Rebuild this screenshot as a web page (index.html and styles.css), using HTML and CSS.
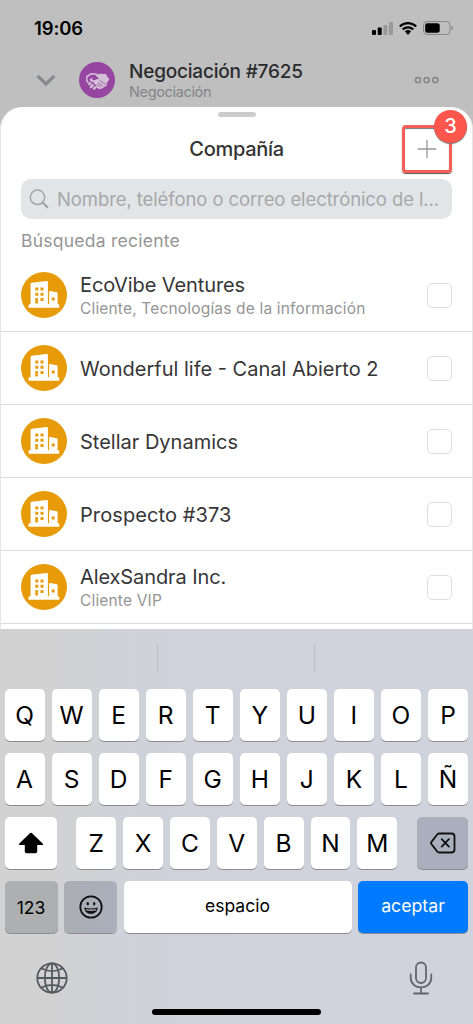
FILE: index.html
```html
<!DOCTYPE html>
<html lang="es">
<head>
<meta charset="utf-8">
<title>Compañía</title>
<link rel="stylesheet" href="styles.css">
</head>
<body>
<svg class="defs" width="0" height="0" aria-hidden="true">
  <symbol id="company" viewBox="0 0 46 46">
    <circle cx="23" cy="23" r="23" fill="#e89b08"/>
    <path fill="#fff" fill-rule="evenodd" d="M7.500 35.700v-2.500c0-.6.4-.9 1-.9h1.100V12.200c0-.8.4-1.200 1.100-1.400L25.300 9.100c.9-.1 1.600.3 1.600 1.200v22h1.200V19.800c0-.8.4-1 1.100-.9l6.500 1.300c.6.1.9.5.9 1.100v11h.8c.6 0 .9.3.9.9v2.500zM14.300 15.400v3h3v-3zM19.500 15.400v3h3v-3zM14.300 20.700v3h3v-3zM19.500 20.700v3h3v-3zM14.300 26v5.500h2.600V26zM19.500 26v3h3V26zM30.700 25.500v3h3v-3z"/>
  </symbol>
</svg>

<header class="top">
  <div class="status">
    <span class="clock">19:06</span>
    <span class="indicators">
      <svg width="21" height="13" viewBox="0 0 21 13"><rect y="8" width="4" height="5" rx="1"/><rect x="5.700" y="5.500" width="4" height="7.500" rx="1"/><g fill="#999"><rect x="11.400" y="3" width="4" height="10" rx="1"/><rect x="17" width="4" height="13" rx="1"/></g></svg>
      <svg width="18" height="13" viewBox="0 0 18 13"><g fill="none" stroke="#000" stroke-width="2.200"><path d="M.8 4.500C5.500.1 12.500.1 17.200 4.500"/><path d="M3.700 7.500C6.700 4.700 11.300 4.700 14.300 7.500"/></g><path d="M5.900 9.200c1.800-1.600 4.400-1.600 6.200 0L9 13z"/></svg>
      <svg width="31" height="14" viewBox="0 0 31 14"><rect x=".5" y=".5" width="26.500" height="13" rx="3.600" fill="none" stroke="#858585"/><rect x="2.200" y="2.200" width="14.500" height="9.600" rx="2"/><path d="M28.500 4.700c2 .9 2 3.700 0 4.600z" fill="#858585"/></svg>
    </span>
  </div>
  <div class="deal">
    <svg class="chevron" width="20" height="13" viewBox="0 0 20 13"><path d="M1.600 1.800 10 10l8.400-8.200" fill="none" stroke="#868a90" stroke-width="3.200"/></svg>
    <svg class="shake" width="36" height="36" viewBox="0 0 36 36"><circle cx="18" cy="18" r="18" fill="#9645a0"/><path fill="#d3bfd6" d="M16.500 13.600 20 11.800l6.800.3 3.500 5.300-2.700 3.800.6 1.600q-.5 1.500-2 1.200-.3 1.600-2 1.400-.5 1.500-2 1.100-1.200 1.300-2.800.3L17 25.200q1.200-2.200-1.400-3l-1-1.900-2.600-.6-1.300-2.300 3-2.500-.8 2.200q1.300 2 4.600.2l2.600-.8z"/><path d="M18.500 12.600 12.500 11.700 8 14.500 7.600 18.500 9.500 21" fill="none" stroke="#d3bfd6" stroke-width="1.500" stroke-linejoin="round"/><path d="m10.300 22.200.9-.9m.8 3.700 1.600-1.900m1.500 3.500.9-1.200" fill="none" stroke="#d3bfd6" stroke-width="2.500" stroke-linecap="round"/><path d="m20.800 18.400 6 4.200m-7.600-2 4.700 3.600m-5.900-2 3.500 2.800" fill="none" stroke="#9645a0" stroke-width=".8"/></svg>
    <div class="deal-text"><div class="deal-name">Negociación #7625</div><div class="deal-kind">Negociación</div></div>
    <svg class="more" width="26" height="8" viewBox="0 0 26 8"><g fill="none" stroke="#858585" stroke-width="1.500"><circle cx="4" cy="4" r="2.600"/><circle cx="12.600" cy="4" r="2.600"/><circle cx="21.300" cy="4" r="2.600"/></g></svg>
  </div>
</header>

<main class="sheet">
  <div class="handle"></div>
  <div class="sheet-head">
    <h1>Compañía</h1>
    <div class="add">
      <svg width="20" height="20" viewBox="0 0 20 20"><path d="M10 .8v18.400M.8 10h18.400" stroke="#999" stroke-width="1.300"/></svg>
      <span class="badge">3</span>
    </div>
  </div>
  <div class="search">
    <svg width="20" height="20" viewBox="0 0 20 20"><circle cx="8.500" cy="8.300" r="7.200" fill="none" stroke="#a3a5a7" stroke-width="1.500"/><path d="m13.800 13.700 4.500 4.400" stroke="#a3a5a7" stroke-width="2.200" stroke-linecap="round"/></svg>
    <span>Nombre, teléfono o correo electrónico de l...</span>
  </div>
  <h2>Búsqueda reciente</h2>
  <ul class="list">
    <li><svg class="avatar"><use href="#company"/></svg><div class="info"><div class="name tight">EcoVibe Ventures</div><div class="sub">Cliente, Tecnologías de la información</div></div><span class="check"></span></li>
    <li><svg class="avatar"><use href="#company"/></svg><div class="info"><div class="name">Wonderful life - Canal Abierto 2</div></div><span class="check"></span></li>
    <li><svg class="avatar"><use href="#company"/></svg><div class="info"><div class="name">Stellar Dynamics</div></div><span class="check"></span></li>
    <li><svg class="avatar"><use href="#company"/></svg><div class="info"><div class="name loose">Prospecto #373</div></div><span class="check"></span></li>
    <li><svg class="avatar"><use href="#company"/></svg><div class="info"><div class="name tight">AlexSandra Inc.</div><div class="sub">Cliente VIP</div></div><span class="check"></span></li>
  </ul>
</main>

<section class="keyboard">
  <div class="suggest"><span></span><span></span><span></span></div>
  <div class="keys">
    <div class="row"><b>Q</b><b>W</b><b>E</b><b>R</b><b>T</b><b>Y</b><b>U</b><b>I</b><b>O</b><b>P</b></div>
    <div class="row"><b>A</b><b>S</b><b>D</b><b>F</b><b>G</b><b>H</b><b>J</b><b>K</b><b>L</b><b>Ñ</b></div>
    <div class="row third">
      <b class="shift"><svg width="26" height="22" viewBox="0 0 26 22"><path d="M12.100 1.100q.9-.8 1.800 0l10.700 10.300q1.300 1.500-.7 1.600h-4.700v6.500q0 1.700-1.700 1.700h-9q-1.700 0-1.700-1.700V13H2.100q-2-.1-.7-1.600z"/></svg></b>
      <div class="row mid"><b>Z</b><b>X</b><b>C</b><b>V</b><b>B</b><b>N</b><b>M</b></div>
      <b class="del"><svg width="26" height="22" viewBox="0 0 26 22"><g fill="none" stroke="#111" stroke-width="1.800" stroke-linecap="round" stroke-linejoin="round"><path d="M9.200 1.500h12.300q3 0 3 3v13q0 3-3 3H9.200q-1 0-1.800-.8L1.700 12.400q-1.400-1.400 0-2.800l5.700-7.300q.8-.8 1.800-.8zM11.700 7.200l7.200 7.400M18.900 7.200l-7.200 7.400"/></g></svg></b>
    </div>
    <div class="row fourth">
      <b class="num">123</b>
      <b class="emoji"><svg width="24" height="24" viewBox="0 0 24 24"><circle cx="12" cy="12" r="10.700" fill="none" stroke="#111" stroke-width="1.800"/><ellipse cx="8.800" cy="8.700" rx="1.200" ry="1.700" fill="#111"/><ellipse cx="15.200" cy="8.700" rx="1.200" ry="1.700" fill="#111"/><path d="M5.300 12.500q6.700 2 13.400 0c-.2 8.600-13.200 8.600-13.400 0z" fill="#111"/><path d="M6.600 14q5.400 1.200 10.800 0l-.7 1.500q-4.700.9-9.400 0z" fill="#b0b2b9"/></svg></b>
      <b class="space">espacio</b>
      <b class="accept">aceptar</b>
    </div>
  </div>
  <div class="tools">
    <svg width="32" height="32" viewBox="0 0 32 32"><g fill="none" stroke="#555960" stroke-width="1.800"><circle cx="16" cy="16" r="14.700"/><ellipse cx="16" cy="16" rx="7.200" ry="14.700"/><path d="M16 1.300v29.400M1.300 16h29.400M5 6.300q11 5.800 22 0M5 25.700q11-5.800 22 0"/></g></svg>
    <svg width="24" height="34" viewBox="0 0 24 34"><g fill="none" stroke="#63666e" stroke-width="1.800" stroke-linecap="round"><rect x="7" y="1.500" width="10" height="20.500" rx="5"/><path d="M1.700 13.500v3.300c0 12.700 20.600 12.700 20.600 0v-3.300M12 26.500v6M5 32.500h14"/></g></svg>
  </div>
  <div class="home"></div>
</section>
</body>
</html>
```

FILE: styles.css
```css
* { box-sizing: border-box; }
body { margin: 0; width: 473px; height: 1024px; overflow: hidden; background: #bfbfbf; font-family: Inter, "Liberation Sans", sans-serif; color: #333; display: flex; flex-direction: column; }
svg { display: block; flex: none; }
.defs { position: absolute; }
h1, h2, ul { margin: 0; padding: 0; }

.top { height: 107px; flex: none; }
.status { height: 56px; padding: 0 19px 0 34px; display: flex; justify-content: space-between; align-items: center; }
.clock { font-size: 18.500px; font-weight: 600; color: #000; letter-spacing: -.1px; }
.indicators { display: flex; align-items: center; gap: 6px; }
.deal { height: 48px; padding: 0 33px 0 36px; display: flex; align-items: center; }
.shake { margin-left: 23px; }
.deal-text { margin-left: 14px; padding-top: 2px; flex: 1; }
.deal-name { font-size: 19px; line-height: 22px; font-weight: 500; letter-spacing: -.2px; color: #2b2c2e; white-space: nowrap; }
.deal-kind { font-size: 14.500px; line-height: 18px; color: #828589; letter-spacing: -.35px; }

.sheet { height: 522px; flex: none; overflow: hidden; background: #fff; border: solid #e6e6e6; border-width: 0 1px; border-radius: 22px 22px 0 0; }
.handle { width: 38px; height: 5px; margin: 5px auto 0; border-radius: 3px; background: #ccc; }
.sheet-head { height: 62px; padding: 8px 20px 0 0; display: grid; grid-template-columns: 1fr 50px; align-items: start; }
h1 { padding: 12px 0 0 70px; font-size: 20px; line-height: 24px; font-weight: 500; text-align: center; letter-spacing: -.3px; }
.add { position: relative; width: 50px; height: 48px; display: flex; align-items: center; justify-content: center; border: 3px solid #f65f57; border-radius: 4px; box-shadow: 0 1px 1px #555, inset 0 1px 1px #777; }
.badge { position: absolute; top: -18px; right: -18px; width: 33px; height: 33px; border-radius: 50%; background: #fc564d; color: #fff; font-size: 20px; line-height: 33px; font-weight: 500; text-align: center; box-shadow: 0 1px 1px #777; }
.search { height: 40px; margin: 0 20px; padding-left: 8px; display: flex; align-items: center; gap: 8px; border-radius: 10px; background: #e1e5e8; color: #a7a8aa; font-size: 18.500px; letter-spacing: -.1px; white-space: nowrap; }
h2 { height: 40px; padding-left: 20px; font-size: 17.500px; line-height: 44px; font-weight: 400; color: #959595; letter-spacing: .25px; }
.list { list-style: none; }
.list li { height: 73.100px; padding: 0 20px; display: flex; align-items: center; border-bottom: 1px solid #dcdcdc; }
.avatar { width: 46px; height: 46px; }
.info { flex: 1; margin-left: 13px; padding-top: 2px; white-space: nowrap; }
.name { font-size: 20px; line-height: 25px; color: #363636; letter-spacing: 0; }
.tight { letter-spacing: -.1px; }
.loose { letter-spacing: .1px; }
.sub { font-size: 15.500px; line-height: 21px; color: #959595; letter-spacing: .17px; }
.check { width: 25px; height: 25px; border: 1px solid #dedede; border-radius: 5px; }

.keyboard { height: 395px; flex: none; background: linear-gradient(90deg, #d2d2d2 0, #d2d2d3 50px, #d0d2da 140px, #d0d3dc 100%); }
.suggest { height: 60px; padding-top: 15px; display: grid; grid-template-columns: repeat(3, 1fr); }
.suggest span { height: 28px; border-right: 1px solid #bdbfc6; }
.suggest span:last-child { border: 0; }
.keys { padding: 0 5px 0 4.500px; display: grid; gap: 12px; }
.row { height: 52px; display: grid; grid-template-columns: repeat(10, 1fr); gap: 7px; }
.row b { display: flex; align-items: center; justify-content: center; background: #fff; border-radius: 5px; box-shadow: 0 1px 0 #8b8d92; color: #000; font-size: 24.500px; font-weight: 400; }
.third { grid-template-columns: 52px 321px 51px; gap: 0; justify-content: space-between; }
.mid { grid-template-columns: repeat(7, 1fr); gap: 7px; }
.fourth { grid-template-columns: 53px 53px 228px 110px; gap: 0; justify-content: space-between; }
.row .del { background: #a9afbc; }
.row .num { background: #adafb0; font-size: 17.500px; }
.row .emoji { background: linear-gradient(90deg, #abadb2, #a9afbc); }
.row .space { padding-bottom: 3px; font-size: 17.500px; }
.row .accept { padding-bottom: 3px; background: #007aff; color: #fff; font-size: 17.700px; }
.tools { height: 76px; padding: 14px 40px 0 36px; display: flex; justify-content: space-between; align-items: center; }
.home { width: 169px; height: 6px; margin: 0 auto; border-radius: 3px; background: #000; }
```
